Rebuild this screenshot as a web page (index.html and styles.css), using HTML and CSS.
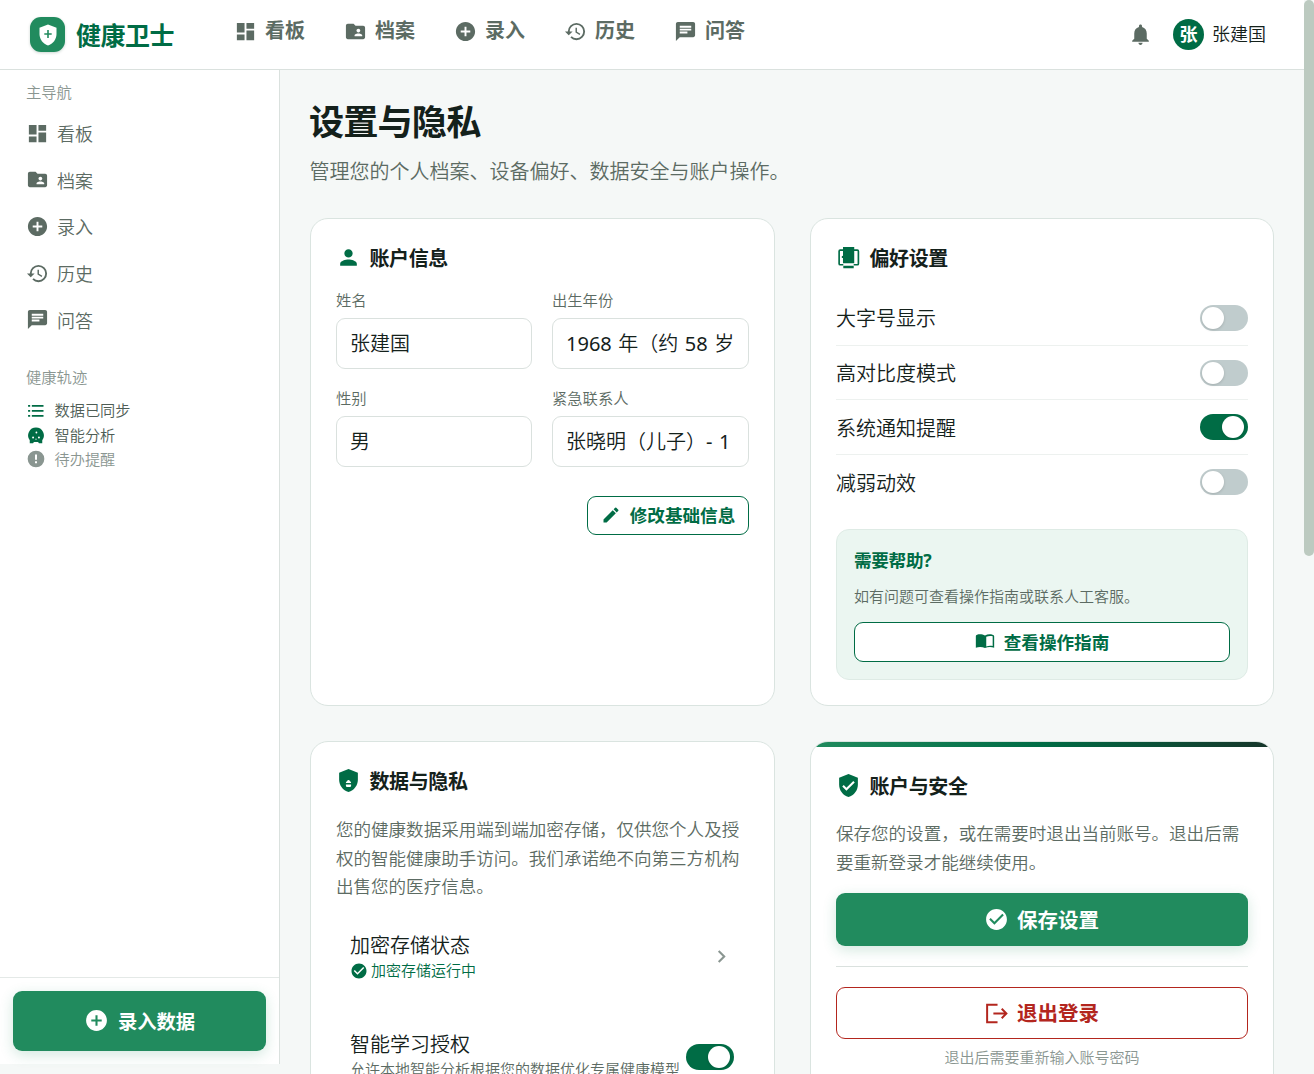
FILE: index.html
```html
<!DOCTYPE html>
<html lang="zh-CN">
  <head>
    <meta charset="UTF-8">
    <title>设置与隐私</title>
    <link rel="stylesheet" href="styles.css">
  </head>
  <body>
    <!-- shared icons -->
    <svg class="icon-defs">
      <symbol id="i-dashboard" viewBox="0 0 24 24"><path d="M3 13h8V3H3v10zm0 8h8v-6H3v6zm10 0h8V11h-8v10zm0-18v6h8V3h-8z"/></symbol>
      <symbol id="i-folder" viewBox="0 0 24 24"><path d="M20 6h-8l-2-2H4c-1.100 0-2 .9-2 2v12c0 1.100.9 2 2 2h16c1.100 0 2-.9 2-2V8c0-1.100-.9-2-2-2zm-5 3c1.100 0 2 .9 2 2s-.9 2-2 2-2-.9-2-2 .9-2 2-2zm4 8h-8v-1c0-1.330 2.670-2 4-2s4 .67 4 2v1z"/></symbol>
      <symbol id="i-add" viewBox="0 0 24 24"><path d="M12 2C6.480 2 2 6.480 2 12s4.480 10 10 10 10-4.480 10-10S17.520 2 12 2zm5 11h-4v4h-2v-4H7v-2h4V7h2v4h4v2z"/></symbol>
      <symbol id="i-history" viewBox="0 0 24 24"><path d="M13 3a9 9 0 0 0-9 9H1l3.890 3.890.07.14L9 12H6c0-3.870 3.130-7 7-7s7 3.130 7 7-3.130 7-7 7c-1.930 0-3.680-.79-4.940-2.060l-1.420 1.420A8.954 8.954 0 0 0 13 21a9 9 0 0 0 0-18zm-1 5v5l4.280 2.540.72-1.210-3.500-2.080V8H12z"/></symbol>
      <symbol id="i-chat" viewBox="0 0 24 24"><path d="M20 2H4c-1.100 0-2 .9-2 2v18l4-4h14c1.100 0 2-.9 2-2V4c0-1.100-.9-2-2-2zM6 9h12v2H6V9zm8 5H6v-2h8v2zm4-6H6V6h12v2z"/></symbol>
      <symbol id="i-check" viewBox="0 0 24 24"><path d="M12 2C6.480 2 2 6.480 2 12s4.480 10 10 10 10-4.480 10-10S17.520 2 12 2zm-2 15l-5-5 1.410-1.410L10 14.170l7.590-7.590L19 8l-9 9z"/></symbol>
    </svg>

    <div class="topbar">
      <div class="brand">
        <span class="brand-logo">
          <svg viewBox="0 0 24 24"><path fill="#fff" d="M12 1.500L3.500 4.700v6.200c0 5.300 3.500 10 8.500 11.600 5-1.600 8.500-6.300 8.500-11.600V4.700z"/><path d="M12 7v8M8.300 11h7.400" stroke="#218b5e" stroke-width="1.600"/></svg>
        </span>
        <span class="brand-name">健康卫士</span>
      </div>
      <nav class="top-nav">
        <a><svg class="icon"><use href="#i-dashboard"/></svg>看板</a>
        <a><svg class="icon"><use href="#i-folder"/></svg>档案</a>
        <a><svg class="icon"><use href="#i-add"/></svg>录入</a>
        <a><svg class="icon"><use href="#i-history"/></svg>历史</a>
        <a><svg class="icon"><use href="#i-chat"/></svg>问答</a>
      </nav>
      <div class="user">
        <svg class="bell" viewBox="0 0 24 24"><path d="M12 22c1.100 0 2-.9 2-2h-4c0 1.100.9 2 2 2zm6-6v-5c0-3.070-1.630-5.640-4.500-6.320V4c0-.83-.67-1.500-1.500-1.500s-1.500.67-1.500 1.500v.68C7.640 5.360 6 7.920 6 11v5l-2 2v1h16v-1l-2-2z"/></svg>
        <span class="avatar">张</span>
        <span class="user-name">张建国</span>
      </div>
    </div>

    <div class="layout">
      <aside class="sidebar">
        <div class="side-title">主导航</div>
        <nav class="side-nav">
          <a><svg class="icon"><use href="#i-dashboard"/></svg>看板</a>
          <a><svg class="icon"><use href="#i-folder"/></svg>档案</a>
          <a><svg class="icon"><use href="#i-add"/></svg>录入</a>
          <a><svg class="icon"><use href="#i-history"/></svg>历史</a>
          <a><svg class="icon"><use href="#i-chat"/></svg>问答</a>
        </nav>
        <div class="side-title track-title">健康轨迹</div>
        <ul class="track">
          <li><svg class="green" viewBox="0 0 24 24"><path d="M2.500 6h2.500v2H2.500zM7 6h14v2H7zM2.500 12h2.500v2H2.500zM7 12h14v2H7zM2.500 18h2.500v2H2.500zM7 18h14v2H7z"/></svg><span>数据已同步</span></li>
          <li><svg class="green" viewBox="0 0 24 24"><path d="M12 3a9.500 9.500 0 0 0-7.500 15.300V22h4l1-1.500h5l1 1.500h4v-3.700A9.500 9.500 0 0 0 12 3z"/><g fill="#fff"><circle cx="12.500" cy="9" r="1.100"/><circle cx="8.500" cy="15" r="1.200"/><circle cx="15.500" cy="15" r="1.200"/><circle cx="12" cy="17" r=".7"/></g></svg><span>智能分析</span></li>
          <li class="pending"><svg viewBox="0 0 24 24"><path d="M12 2a10 10 0 1 0 0 20 10 10 0 0 0 0-20zm1.200 15h-2.400v-2.200h2.400V17zm0-4h-2.400V6.500h2.400V13z"/></svg><span>待办提醒</span></li>
        </ul>
        <div class="side-footer">
          <button class="btn btn-entry"><svg><use href="#i-add"/></svg>录入数据</button>
        </div>
      </aside>

      <main class="content">
        <h1>设置与隐私</h1>
        <p class="subtitle">管理您的个人档案、设备偏好、数据安全与账户操作。</p>

        <div class="cards">
          <section class="card">
            <h2><svg viewBox="0 0 24 24"><path d="M12 12c2.210 0 4-1.790 4-4s-1.790-4-4-4-4 1.790-4 4 1.790 4 4 4zm0 2c-2.670 0-8 1.340-8 4v2h16v-2c0-2.660-5.330-4-8-4z"/></svg>账户信息</h2>
            <div class="fields">
              <div class="field"><label>姓名</label><input type="text" value="张建国" readonly></div>
              <div class="field"><label>出生年份</label><input type="text" value="1968 年（约 58 岁）" readonly></div>
              <div class="field"><label>性别</label><input type="text" value="男" readonly></div>
              <div class="field"><label>紧急联系人</label><input type="text" value="张晓明（儿子）- 1" readonly></div>
            </div>
            <div class="edit-row">
              <button class="btn btn-outline btn-edit"><svg viewBox="0 0 24 24"><path d="M3 17.250V21h3.750L17.810 9.940l-3.750-3.750L3 17.250zM20.710 7.040a1 1 0 0 0 0-1.410l-2.340-2.340a1 1 0 0 0-1.410 0l-1.830 1.830 3.750 3.750 1.830-1.830z"/></svg><span>修改基础信息</span></button>
            </div>
          </section>

          <section class="card">
            <h2><svg viewBox="0 0 24 24"><path d="M6.700 1.800h10.800V17.500H6.700zM7 20h10v2.200H7z"/><path d="M7 4.900H4a1 1 0 0 0-1 1V18a1 1 0 0 0 1 1h3M17 4.900h3.500a1 1 0 0 1 1 1V18a1 1 0 0 1-1 1H17" fill="none" stroke="currentColor" stroke-width="1.600"/><path d="M5.600 10.500h1.500v2H5.600z"/></svg>偏好设置</h2>
            <div class="options">
              <div class="option">大字号显示<span class="toggle"></span></div>
              <div class="option">高对比度模式<span class="toggle"></span></div>
              <div class="option">系统通知提醒<span class="toggle on"></span></div>
              <div class="option">减弱动效<span class="toggle"></span></div>
            </div>
            <div class="help">
              <h3>需要帮助?</h3>
              <p>如有问题可查看操作指南或联系人工客服。</p>
              <button class="btn btn-outline btn-guide"><svg viewBox="0 0 24 24"><path d="M21 4.500c-3-.9-6.200-.6-9 1-2.800-1.600-6.800-1.900-9.500-1-.9.300-1.500.8-1.500 1.700V20c3.800-1.300 7.700-1.200 11 .5 3.300-1.700 7.200-1.800 11-.5V6.200c0-.9-1-1.400-2-1.700zm.2 13.500c-2.600-.5-5-.4-7.700.5V6.800c2.500-.9 5.200-1.100 7.700-.4z"/></svg>查看操作指南</button>
            </div>
          </section>

          <section class="card">
            <h2><svg viewBox="0 0 24 24"><path d="M12 1L3 4.500v6.800c0 5.400 3.600 10.200 9 11.700 5.400-1.500 9-6.300 9-11.700V4.500z"/><path fill="#fff" d="M10.600 12.600a1.500 1.500 0 0 1 2.800 0c.6.1 1 .7 1.100 1.700h-5c.1-1 .5-1.600 1.100-1.700zM9.500 15.800h5v1c0 1-.7 1.500-1.500 1.500h-2c-.8 0-1.500-.5-1.500-1.500z"/></svg>数据与隐私</h2>
            <p class="desc desc-privacy">您的健康数据采用端到端加密存储，仅供您个人及授权的智能健康助手访问。我们承诺绝不向第三方机构出售您的医疗信息。</p>
            <div class="privacy-item">
              <div>
                <div class="item-title">加密存储状态</div>
                <div class="item-status"><svg><use href="#i-check"/></svg><span>加密存储运行中</span></div>
              </div>
              <svg class="chevron" viewBox="0 0 24 24"><path d="M10 6L8.590 7.410 13.170 12l-4.580 4.590L10 18l6-6z"/></svg>
            </div>
            <div class="privacy-item">
              <div>
                <div class="item-title">智能学习授权</div>
                <div class="item-note">允许本地智能分析根据您的数据优化专属健康模型</div>
              </div>
              <span class="toggle on"></span>
            </div>
          </section>

          <section class="card card-security">
            <h2><svg viewBox="0 0 24 24"><path d="M12 1L3 4.500v6.800c0 5.400 3.600 10.200 9 11.700 5.400-1.500 9-6.300 9-11.700V4.500zm-2 16l-4-4 1.410-1.410L10 14.170l6.590-6.590L18 9l-8 8z"/></svg>账户与安全</h2>
            <p class="desc">保存您的设置，或在需要时退出当前账号。退出后需要重新登录才能继续使用。</p>
            <button class="btn btn-save"><svg><use href="#i-check"/></svg>保存设置</button>
            <hr>
            <button class="btn btn-logout"><svg viewBox="0 0 24 24"><path d="M13 3.500H3v17h10M9 12h12.500M17 7.500l4.500 4.500-4.500 4.500" fill="none" stroke="currentColor" stroke-width="1.900"/></svg><span>退出登录</span></button>
            <p class="logout-note">退出后需要重新输入账号密码</p>
          </section>
        </div>
      </main>
    </div>
    <div class="scroll-thumb"></div>
  </body>
</html>
```

FILE: styles.css
```css
* {
  box-sizing: border-box;
}

body {
  margin: 0;
  height: 1074px;
  overflow: hidden;
  background: #f5f8f7;
  color: #14211b;
  font-family: "Noto Sans", "Noto Sans CJK SC", sans-serif;
  font-size: 20px;
  font-weight: 350;
}

h1, h2, h3, p, ul {
  margin: 0;
  padding: 0;
}

svg {
  fill: currentColor;
  flex: none;
}

.icon-defs {
  display: none;
}

.icon {
  width: 23px;
  height: 23px;
}

/* Top bar */
.topbar {
  display: flex;
  align-items: center;
  width: 1304px;
  height: 70px;
  padding: 0 38px 0 30px;
  background: #fff;
  border-bottom: 1px solid #dae1de;
}

.brand {
  display: flex;
  align-items: center;
  gap: 11px;
  width: 204px;
  color: #006c45;
}

.brand-logo {
  display: flex;
  align-items: center;
  justify-content: center;
  width: 35px;
  height: 35px;
  border-radius: 11px;
  background: #218b5e;
  box-shadow: 0 1px 3px rgba(0, 60, 35, 0.2);
}

.brand-logo svg {
  width: 24px;
  height: 24px;
}

.brand-name {
  padding-bottom: 2px;
  font-size: 25px;
  font-weight: 700;
  letter-spacing: -0.5px;
}

.top-nav {
  display: flex;
  gap: 39px;
  padding-bottom: 7px;
  color: #5c6b63;
  font-weight: 700;
  line-height: 30px;
}

.top-nav a, .side-nav a {
  display: flex;
  align-items: center;
  gap: 8px;
}

.user {
  display: flex;
  align-items: center;
  margin-left: auto;
}

.bell {
  width: 25px;
  height: 25px;
  margin-right: 20px;
  color: #5c6b63;
}

.avatar {
  width: 31px;
  height: 31px;
  margin-right: 8px;
  border-radius: 50%;
  background: #006c45;
  color: #fff;
  font-size: 18px;
  font-weight: 700;
  line-height: 30px;
  text-align: center;
}

.user-name {
  padding-bottom: 3px;
  font-size: 18px;
}

/* Sidebar */
.layout {
  display: flex;
  width: 1304px;
}

.sidebar {
  display: flex;
  flex-direction: column;
  flex: none;
  width: 280px;
  height: 994px;
  padding-top: 11px;
  background: #fff;
  border-right: 1px solid #dae1de;
}

.side-title {
  padding-left: 26px;
  color: #8a9691;
  font-size: 15.300px;
  line-height: 22px;
}

.side-nav {
  padding: 7px 0 0 26px;
  color: #5c6b63;
  font-size: 18px;
}

.side-nav a {
  height: 46.600px;
}

.track-title {
  margin-top: 23px;
}

.track {
  padding: 10px 0 0 26px;
  list-style: none;
  color: #4e5d55;
  font-size: 15.200px;
}

.track li {
  display: flex;
  align-items: center;
  gap: 8.500px;
  height: 24.600px;
}

.track span {
  padding-bottom: 2px;
}

.track svg {
  width: 20px;
  height: 20px;
}

.green {
  color: #006c45;
}

.track .pending {
  color: #8a9691;
}

.side-footer {
  margin-top: auto;
  padding: 13px;
  border-top: 1px solid #e4e9e7;
}

/* Buttons */
.btn {
  display: flex;
  align-items: center;
  justify-content: center;
  padding: 0 0 1px;
  border: none;
  border-radius: 9px;
  font-family: inherit;
  font-weight: 700;
}

.btn-entry {
  gap: 9px;
  width: 253px;
  height: 60px;
  background: #218b5e;
  color: #fff;
  font-size: 19.300px;
  box-shadow: 0 4px 14px rgba(33, 139, 94, 0.2);
}

.btn-entry svg, .btn-save svg, .btn-logout svg {
  width: 25px;
  height: 25px;
}

.btn-outline {
  gap: 9px;
  border: 1px solid #006c45;
  background: #fff;
  color: #006c45;
  font-size: 17.600px;
}

.btn-outline svg {
  width: 20px;
  height: 20px;
}

.btn-edit span, .btn-logout span {
  padding-bottom: 2px;
}

/* Main content */
.content {
  padding: 29px 0 0 30px;
}

h1 {
  margin-left: -1px;
  font-size: 35.200px;
  line-height: 44px;
  letter-spacing: -0.900px;
}

.subtitle {
  margin: 14px 0 0 -0.5px;
  color: #5c6b63;
  font-size: 20px;
  line-height: 30px;
}

.cards {
  display: grid;
  grid-template-columns: 465px 464px;
  grid-template-rows: 488px 488px;
  gap: 35px;
  margin-top: 31px;
}

.card {
  padding: 23px 25px;
  border: 1px solid #dae4e0;
  border-radius: 18px;
  background: #fff;
  overflow: hidden;
}

.card h2 {
  display: flex;
  align-items: center;
  gap: 8.500px;
  height: 30px;
  font-size: 20px;
  letter-spacing: -0.4px;
}

.card h2 svg {
  width: 25px;
  height: 25px;
  color: #006c45;
}

.fields {
  display: grid;
  grid-template-columns: 196px 197px;
  column-gap: 20px;
  row-gap: 17px;
  margin-top: 16px;
}

.field label {
  display: block;
  height: 30px;
  color: #5c6b63;
  font-size: 15.300px;
  line-height: 24px;
}

.field input {
  display: block;
  width: 100%;
  height: 51px;
  padding: 0 14px 2px 13px;
  border: 1px solid #dae1de;
  border-radius: 9px;
  background: #fff;
  color: #14211b;
  font-family: "Noto Sans", "Noto Sans CJK SC DemiLight", "Noto Sans CJK SC Light", "Noto Sans CJK SC", sans-serif;
  font-size: 20px;
  font-weight: 400;
  word-spacing: 1.300px;
}

.edit-row {
  display: flex;
  justify-content: flex-end;
  margin-top: 29px;
}

.btn-edit {
  width: 162px;
  height: 39px;
}

.options {
  margin-top: 19px;
}

.option {
  display: flex;
  align-items: center;
  justify-content: space-between;
  height: 54.700px;
  border-bottom: 1px solid #edf1ef;
}

.option:last-child {
  border-bottom: none;
}

.toggle {
  flex: none;
  width: 48px;
  height: 26px;
  padding: 2px;
  border-radius: 13px;
  background: #c0cccd;
}

.toggle::after {
  content: "";
  display: block;
  width: 22px;
  height: 22px;
  border-radius: 50%;
  background: #fff;
  box-shadow: 0 1px 3px rgba(0, 0, 0, 0.15);
}

.toggle.on {
  background: #006c45;
}

.toggle.on::after {
  margin-left: 20px;
}

.help {
  margin-top: 19px;
  height: 151px;
  padding: 18px 17px 0;
  border: 1px solid #deebe5;
  border-radius: 13px;
  background: #ebf6f1;
}

.help h3 {
  color: #006c45;
  font-size: 17.600px;
  line-height: 24px;
  letter-spacing: -0.3px;
}

.help p {
  margin: 12px 0 14px;
  color: #5c6b63;
  font-size: 15px;
  line-height: 24px;
}

.btn-guide {
  width: 100%;
  height: 40px;
}

.desc {
  margin-top: 19px;
  color: #5c6b63;
  font-size: 17.550px;
  line-height: 28.500px;
}

.desc-privacy {
  margin-top: 20px;
}

.privacy-item {
  display: flex;
  align-items: center;
  justify-content: space-between;
  height: 98px;
  padding: 0 15px 0 14px;
}

.desc + .privacy-item {
  margin-top: 8px;
}

.privacy-item .toggle {
  margin-top: 2px;
}

.item-title {
  line-height: 27px;
}

.item-status, .item-note {
  display: flex;
  align-items: center;
  gap: 3px;
  font-size: 15px;
  line-height: 22px;
  white-space: nowrap;
}

.item-status {
  color: #006c45;
}

.item-status span {
  padding-bottom: 2px;
}

.item-status svg {
  width: 18px;
  height: 18px;
}

.item-note {
  color: #5c6b63;
}

.chevron {
  width: 25px;
  height: 25px;
  margin-bottom: 2px;
  color: #8a9691;
}

.card-security {
  position: relative;
  padding-top: 28px;
}

.card-security::before {
  content: "";
  position: absolute;
  top: 0;
  left: 0;
  width: 100%;
  height: 5px;
  background: linear-gradient(90deg, #218b5e, #006c45 50%, #17352a);
}

.btn-save {
  gap: 8px;
  width: 100%;
  height: 53px;
  margin-top: 17px;
  padding-right: 1px;
  background: #218b5e;
  color: #fff;
  font-size: 20.500px;
  box-shadow: 0 4px 14px rgba(33, 139, 94, 0.2);
}

hr {
  height: 1px;
  margin: 20px 0;
  border: none;
  background: #dae1de;
}

.btn-logout {
  gap: 8px;
  width: 100%;
  height: 52px;
  padding: 0 1px 0 0;
  border: 1px solid #b3261e;
  background: #fff;
  color: #b3261e;
  font-size: 20.500px;
}

.logout-note {
  margin-top: 6px;
  color: #8a9691;
  font-size: 15px;
  line-height: 24px;
  text-align: center;
}

/* Page scrollbar */
.scroll-thumb {
  position: absolute;
  top: 0;
  right: 0;
  width: 10px;
  height: 556px;
  border-radius: 5px;
  background: #bccac0;
}
```
